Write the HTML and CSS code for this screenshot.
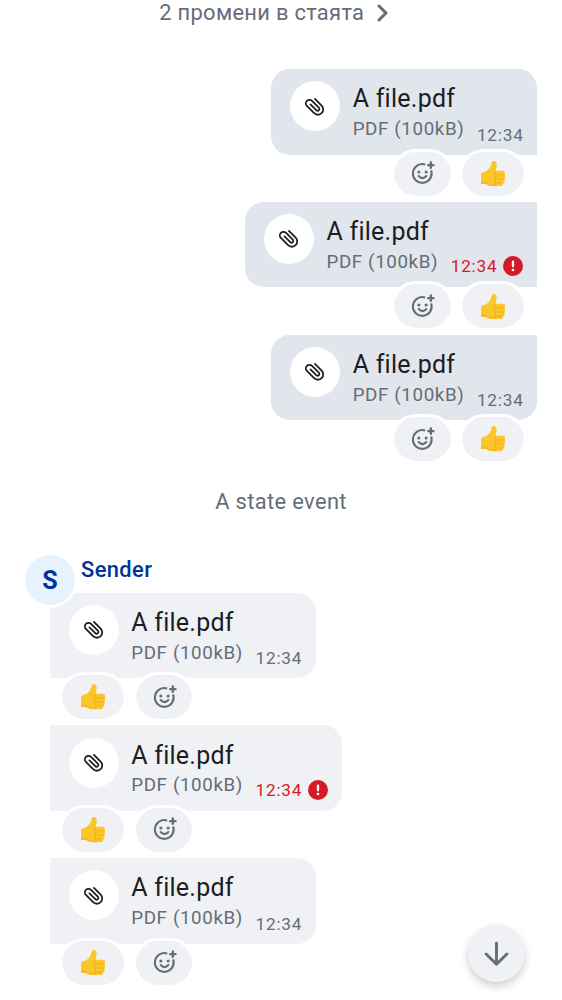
FILE: index.html
```html
<!DOCTYPE html>
<html lang="bg">
<head>
<meta charset="utf-8">
<title>Timeline</title>
<link rel="stylesheet" href="styles.css">
</head>
<body>
<svg class="sprite" aria-hidden="true">
  <symbol id="clip" viewBox="0 0 24 24"><path transform="rotate(-45 12 12)" fill="none" stroke="currentColor" stroke-width="1.700" stroke-linecap="round" d="M17.400 7.200V16.300a5.100 5.100 0 0 1-10.200 0V6.500a3.500 3.500 0 0 1 7 0V15.700a1.750 1.750 0 0 1-3.500 0V7.800"/></symbol>
  <symbol id="react" viewBox="0 0 24 24"><g fill="none" stroke="currentColor" stroke-width="2"><path d="M14.600 3.400A9 9 0 1 0 20.300 9"/><path d="M8.300 14.500q3.700 3.700 7.400 0" stroke-linecap="round"/><path d="M20 1.500v5M17.500 4h5" stroke-width="2.300" stroke-linecap="round"/></g><circle cx="8.500" cy="10.500" r="1.500" fill="currentColor"/><circle cx="15.500" cy="10.500" r="1.500" fill="currentColor"/></symbol>
  <symbol id="error" viewBox="0 0 20 20"><circle cx="10" cy="10" r="10" fill="#d51928"/><path d="M10 5.700v4.600" stroke="#fff" stroke-width="2.300" stroke-linecap="round"/><circle cx="10" cy="14" r="1.300" fill="#fff"/></symbol>
  <symbol id="thumb" viewBox="0 0 73 77">
    <path fill="#fcc52a" d="M0 39Q0 35 5 34Q14 32 19 28Q28 20 30 12L31 5Q32 0 38 0Q46 1 47 10Q47 20 43 29H64Q72 29 72 36Q72 40 70 42Q74 46 72 51Q71 53 69 54Q72 58 70 63Q69 65 66 66Q68 76 56 76H36Q25 76 17 70Q12 67 0 69Z"/>
    <path fill="#f9b91c" d="M0 62Q12 60 20 66Q32 72 44 71V76H36Q25 76 17 70Q12 67 0 69Z"/>
    <path fill="none" stroke="#eda81a" stroke-width="2.200" stroke-linecap="round" d="M43 29Q37 33 42 41Q38 47 43 54Q39 60 44 66Q42 71 45 75M43 42H70M43 54H69M44 66H66"/>
  </symbol>
</svg>
<main class="timeline">
  <div class="changes"><span>2 промени в стаята</span><svg class="chevron" viewBox="0 0 12 18"><path d="M2 2l7 7-7 7"/></svg></div>

  <section class="group mine">
    <article class="message">
      <div class="bubble"><span class="file-icon"><svg><use href="#clip"/></svg></span><div class="file"><div class="name">A file.pdf</div><div class="info">PDF (100kB)</div></div><div class="time">12:34</div></div>
      <div class="reactions"><span class="pill add"><svg><use href="#react"/></svg></span><span class="pill emoji"><svg role="img" aria-label="👍"><use href="#thumb"/></svg></span></div>
    </article>
    <article class="message">
      <div class="bubble"><span class="file-icon"><svg><use href="#clip"/></svg></span><div class="file"><div class="name">A file.pdf</div><div class="info">PDF (100kB)</div></div><div class="time failed">12:34<svg><use href="#error"/></svg></div></div>
      <div class="reactions"><span class="pill add"><svg><use href="#react"/></svg></span><span class="pill emoji"><svg role="img" aria-label="👍"><use href="#thumb"/></svg></span></div>
    </article>
    <article class="message">
      <div class="bubble"><span class="file-icon"><svg><use href="#clip"/></svg></span><div class="file"><div class="name">A file.pdf</div><div class="info">PDF (100kB)</div></div><div class="time">12:34</div></div>
      <div class="reactions"><span class="pill add"><svg><use href="#react"/></svg></span><span class="pill emoji"><svg role="img" aria-label="👍"><use href="#thumb"/></svg></span></div>
    </article>
  </section>

  <div class="state">A state event</div>

  <section class="group theirs">
    <header class="sender"><span class="avatar">S</span><span class="sender-name">Sender</span></header>
    <article class="message">
      <div class="bubble"><span class="file-icon"><svg><use href="#clip"/></svg></span><div class="file"><div class="name">A file.pdf</div><div class="info">PDF (100kB)</div></div><div class="time">12:34</div></div>
      <div class="reactions"><span class="pill emoji"><svg role="img" aria-label="👍"><use href="#thumb"/></svg></span><span class="pill add"><svg><use href="#react"/></svg></span></div>
    </article>
    <article class="message">
      <div class="bubble"><span class="file-icon"><svg><use href="#clip"/></svg></span><div class="file"><div class="name">A file.pdf</div><div class="info">PDF (100kB)</div></div><div class="time failed">12:34<svg><use href="#error"/></svg></div></div>
      <div class="reactions"><span class="pill emoji"><svg role="img" aria-label="👍"><use href="#thumb"/></svg></span><span class="pill add"><svg><use href="#react"/></svg></span></div>
    </article>
    <article class="message">
      <div class="bubble"><span class="file-icon"><svg><use href="#clip"/></svg></span><div class="file"><div class="name">A file.pdf</div><div class="info">PDF (100kB)</div></div><div class="time">12:34</div></div>
      <div class="reactions"><span class="pill emoji"><svg role="img" aria-label="👍"><use href="#thumb"/></svg></span><span class="pill add"><svg><use href="#react"/></svg></span></div>
    </article>
  </section>
</main>
<button class="jump" aria-label="Jump to bottom"><svg viewBox="0 0 24 24"><path d="M12 2v20M2 12.500l10 9.800 10-9.800"/></svg></button>
</body>
</html>
```

FILE: styles.css
```css
* { box-sizing: border-box; }
body {
  margin: 0;
  height: 1000px;
  overflow: hidden;
  background: #fff;
  color: #1b1d22;
  font-family: Roboto, "Noto Sans", sans-serif;
}
.sprite { position: absolute; width: 0; height: 0; }
.timeline { display: flex; flex-direction: column; }
.changes, .state {
  display: flex;
  justify-content: center;
  align-items: center;
  color: #656d77;
  font-size: 21.9px;
  letter-spacing: 0.36px;
  line-height: 30px;
}
.changes { height: 30px; margin-top: -2px; padding-right: 14px; gap: 12.5px; letter-spacing: 0.3px; }
.chevron { width: 12px; height: 18px; fill: none; stroke: currentColor; stroke-width: 3; stroke-linecap: round; stroke-linejoin: round; }
.group { display: flex; flex-direction: column; }
.mine { margin-top: 41px; padding-right: 25px; align-items: flex-end; }
.message { display: flex; flex-direction: column; height: 132.8px; }
.mine .message { align-items: flex-end; }
.bubble {
  display: flex;
  height: 85.700px;
  padding: 12.200px 13.300px 10px 18.750px;
  background: #f0f1f5;
  border-radius: 0 18.750px 18.750px 0;
}
.mine .bubble { background: #e1e6ec; border-radius: 18.750px 0 0 18.750px; }
.mine .message:first-child .bubble { border-top-right-radius: 18.750px; }
.mine .message:last-child .bubble { border-bottom-right-radius: 18.750px; }
.file-icon {
  display: grid;
  place-items: center;
  width: 50px;
  height: 50px;
  margin-right: 12.500px;
  border-radius: 50%;
  background: #fff;
}
.file-icon svg { width: 25px; height: 25px; margin-right: 1px; }
.name { font-size: 25px; line-height: 35px; letter-spacing: 0.25px; }
.info { padding-top: 0.8px; color: #656d77; font-size: 18.750px; line-height: 24px; letter-spacing: 0.620px; }
.time {
  display: flex;
  align-items: center;
  align-self: flex-end;
  height: 20px;
  margin-left: 12.500px;
  color: #656d77;
  font-size: 17.200px;
  line-height: 20px;
  letter-spacing: 0.800px;
}
.failed { color: #d51928; margin-bottom: 1px; }
.failed svg { width: 20px; height: 20px; margin-left: 5.500px; margin-right: 0.7px; }
.reactions { display: flex; gap: 5.500px; margin-top: -6.200px; padding: 0 9.700px; }
.theirs .reactions { padding: 0 9.300px; }
.pill {
  display: grid;
  place-items: center;
  height: 50px;
  border: 3.100px solid #fff;
  border-radius: 25px;
  background: #f0f1f5;
  background-clip: padding-box;
}
.add { width: 62.500px; color: #656d77; }
.add svg { width: 25px; height: 25px; }
.emoji { width: 68px; }
.emoji svg { width: 24.500px; height: 25.600px; }
.state { margin-top: 19.800px; }
.theirs { margin-top: 34.900px; padding-left: 50px; align-items: flex-start; }
.sender { display: flex; height: 40.500px; margin-left: -28px; position: relative; }
.avatar {
  display: grid;
  place-items: center;
  width: 56px;
  height: 56px;
  padding-top: 1px;
  border: 3px solid #fff;
  border-radius: 50%;
  background: #e7f2ff;
  color: #003399;
  font-size: 25px;
  font-weight: 700;
}
.sender-name { margin-left: 3px; padding-top: 3.300px; color: #003399; font-size: 21.900px; font-weight: 500; line-height: 30px; letter-spacing: 0.400px; }
.jump {
  position: absolute;
  left: 468px;
  top: 925px;
  display: grid;
  place-items: center;
  width: 57px;
  height: 57px;
  padding: 0;
  border: 0;
  border-radius: 50%;
  background: #f0f1f5;
  color: #656d77;
  box-shadow: 0 4px 8px rgba(0, 0, 0, 0.200);
}
.jump svg { width: 25px; height: 25px; fill: none; stroke: currentColor; stroke-width: 2.8; stroke-linecap: round; stroke-linejoin: round; }
```
